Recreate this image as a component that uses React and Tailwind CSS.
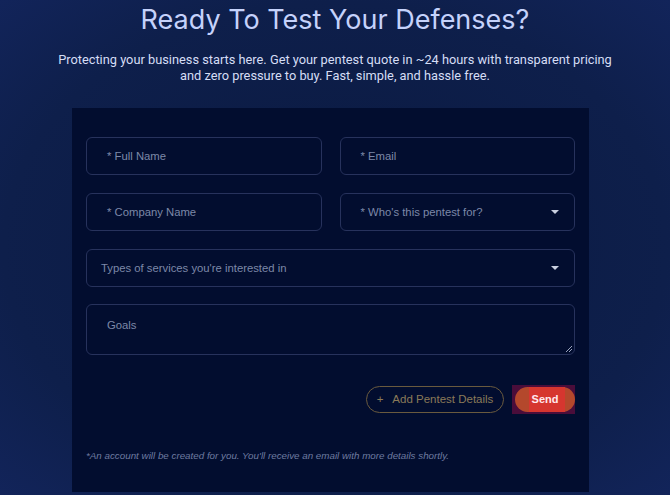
import React from "react";

function Caret() {
  return (
    <svg width="8" height="4" viewBox="0 0 8 4" className="shrink-0">
      <path d="M0 0 L8 0 L4 4 Z" fill="#c9cfe0" />
    </svg>
  );
}

function Field({ label, select, pl = "pl-[20px]" }) {
  return (
    <div className={`h-[38px] flex items-center justify-between ${pl} pr-[15px] border border-[#27325c] rounded-[6px] bg-[#020d2f]`}>
      <span className="text-[11.3px] text-[#7d88a8]" style={{ fontFamily: '"Liberation Sans", Arial, sans-serif' }}>{label}</span>
      {select && <Caret />}
    </div>
  );
}

export default function App() {
  return (
    <div className="w-[670px] h-[495px] overflow-hidden bg-[radial-gradient(ellipse_at_center,#0a1940_0%,#0e1f4b_70%,#12245a_100%)]">
      <h1 className="pt-[2px] text-center text-[27px] leading-[36px] text-[#c5d2fb] font-normal" style={{ fontFamily: 'Inter, "DejaVu Sans", sans-serif' }}>
        Ready To Test Your Defenses?
      </h1>
      <p className="mt-[14px] text-center text-[12.8px] leading-[16px] text-[#d5ddf5]" style={{ fontFamily: 'Roboto, "Liberation Sans", sans-serif' }}>
        Protecting your business starts here. Get your pentest quote in ~24 hours with transparent pricing
        <br />
        and zero pressure to buy. Fast, simple, and hassle free.
      </p>
      <div className="mt-[24px] ml-[72px] w-[517px] h-[384px] bg-[#020d2f] px-[14px] pt-[29px]">
        <div className="grid grid-cols-2 gap-x-[18px] gap-y-[18px]">
          <Field label="* Full Name" />
          <Field label="* Email" />
          <Field label="* Company Name" />
          <Field label="* Who's this pentest for?" select />
        </div>
        <div className="mt-[18px]">
          <Field label="Types of services you're interested in" select pl="pl-[14px]" />
        </div>
        <div className="mt-[17px] h-[51px] border border-[#27325c] rounded-[6px] relative pl-[20px] pt-[6px]">
          <span className="text-[11.3px] text-[#7d88a8]" style={{ fontFamily: '"Liberation Sans", Arial, sans-serif' }}>Goals</span>
          <svg width="6" height="6" viewBox="0 0 6 6" className="absolute right-[2px] bottom-[2px]">
            <path d="M6 0 L0 6 M6 3 L3 6" stroke="#9aa3bd" strokeWidth="1" />
          </svg>
        </div>
        <div className="mt-[30px] flex justify-end items-center gap-[8px]" style={{ fontFamily: '"Liberation Sans", Arial, sans-serif' }}>
          <div className="h-[27px] w-[138px] rounded-full border border-[#6a5a3e] flex items-center justify-center gap-[9px] text-[11.5px] text-[#8a7a58]">
            <span>+</span>
            <span>Add Pentest Details</span>
          </div>
          <div className="relative h-[29px] w-[63px] bg-[#4a0d3a] flex items-center justify-end">
            <div className="h-[25px] w-[60px] rounded-full bg-[#b4482c] flex items-center justify-center">
              <div className="absolute inset-y-[2px] left-[17px] right-[10px] bg-[#d6362f]" />
              <span className="relative text-[11px] font-bold text-[#ffe8ee]">Send</span>
            </div>
          </div>
        </div>
        <p className="mt-[35px] text-[9.8px] italic text-[#6e7ba0]" style={{ fontFamily: '"Liberation Sans", Arial, sans-serif' }}>
          *An account will be created for you. You'll receive an email with more details shortly.
        </p>
      </div>
    </div>
  );
}
